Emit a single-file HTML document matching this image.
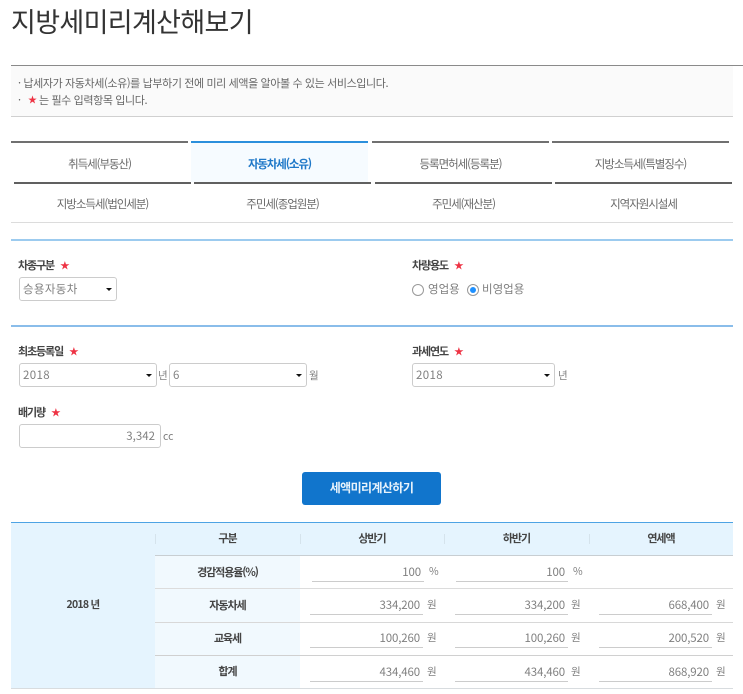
<!DOCTYPE html>
<html lang="ko"><head><meta charset="utf-8"><style>
html,body{margin:0;padding:0;background:#fff}
#p{position:relative;width:743px;height:694px;overflow:hidden;background:#fff;font-family:"Noto Sans CJK KR","Liberation Sans",sans-serif;color:#666}
#p div{position:absolute;white-space:nowrap}
.l{height:1px}
.tab{font-size:11.5px;letter-spacing:-1.05px;text-align:center;line-height:16px;color:#6a6a6a;width:177px}
.lab{font-size:11px;font-weight:700;letter-spacing:-1.1px;color:#444;line-height:16px}
.lab i{font-style:normal;color:#ee3344;margin-left:6px;font-size:9.5px;font-weight:400;letter-spacing:0}
.sel{box-sizing:border-box;border:1px solid #ccc;border-radius:3px;background:#fff;height:24px;line-height:23px;font-size:11.5px;color:#808080;padding-left:3px;letter-spacing:.35px}
.sel:after{content:"";position:absolute;right:4px;top:10px;border:3px solid transparent;border-top:3px solid #111;border-bottom:0}
.inp{box-sizing:border-box;border:1px solid #ccc;border-radius:3px;background:#fff;height:24px;line-height:23px;font-size:11.5px;color:#808080;text-align:right;padding-right:5px}
.u{font-size:10.5px;color:#808080;line-height:16px}
.th{font-size:11px;font-weight:700;letter-spacing:-1px;color:#444;text-align:center;line-height:16px}
.v{font-size:11.5px;letter-spacing:-.15px;color:#808080;text-align:right;line-height:16px;border-bottom:1px solid #ccc;height:24px;box-sizing:border-box;padding:6px 3px 0 0}
.n{font-size:11px;letter-spacing:-.38px;line-height:16px;color:#666}
</style></head><body><div id="p">
<div style="left:11px;top:3px;font-size:27px;letter-spacing:-.65px;line-height:36px;color:#333;font-weight:400">지방세미리계산해보기</div>
<div class="l" style="left:11px;top:65px;width:732px;background:#8a8a8a"></div>
<div style="left:11px;top:66px;width:722px;height:50px;background:#fafafa"></div>
<div class="l" style="left:11px;top:116px;width:722px;background:#d0d0d0"></div>
<div class="n" style="left:18px;top:75px">· 납세자가 자동차세(소유)를 납부하기 전에 미리 세액을 알아볼 수 있는 서비스입니다.</div>
<div class="n" style="left:18px;top:92px">·</div>
<div style="left:28px;top:92px;font-size:9px;line-height:16px;color:#ee3344">★</div>
<div class="n" style="left:39px;top:92px">는 필수 입력항목 입니다.</div>

<div style="left:191px;top:143px;width:177px;height:39px;background:#f6fbff"></div>
<div style="left:11px;top:141px;width:177px;height:2px;background:#707070"></div>
<div style="left:191px;top:141px;width:177px;height:2px;background:#2b8fdc"></div>
<div style="left:372px;top:141px;width:177px;height:2px;background:#707070"></div>
<div style="left:552px;top:141px;width:177px;height:2px;background:#707070"></div>
<div style="left:14px;top:182px;width:177px;height:2px;background:#606060"></div>
<div style="left:194px;top:182px;width:177px;height:2px;background:#606060"></div>
<div style="left:375px;top:182px;width:177px;height:2px;background:#606060"></div>
<div style="left:555px;top:182px;width:177px;height:2px;background:#606060"></div>
<div class="tab" style="left:11px;top:156px">취득세(부동산)</div>
<div class="tab" style="left:191px;top:156px;color:#1f78c8;font-weight:700;letter-spacing:-1.15px">자동차세(소유)</div>
<div class="tab" style="left:372px;top:156px">등록면허세(등록분)</div>
<div class="tab" style="left:552px;top:156px">지방소득세(특별징수)</div>
<div class="tab" style="left:14px;top:196px">지방소득세(법인세분)</div>
<div class="tab" style="left:194px;top:196px">주민세(종업원분)</div>
<div class="tab" style="left:375px;top:196px">주민세(재산분)</div>
<div class="tab" style="left:555px;top:196px">지역자원시설세</div>
<div class="l" style="left:11px;top:222px;width:722px;background:#dcdcdc"></div>

<div style="left:11px;top:239px;width:722px;height:2px;background:#9ccbef"></div>
<div class="lab" style="left:18px;top:257px">차종구분<i>★</i></div>
<div class="sel" style="left:19px;top:277px;width:98px">승용자동차</div>
<div class="lab" style="left:412px;top:257px">차량용도<i>★</i></div>
<div style="left:412px;top:284px;width:10px;height:10px;border:1px solid #999;border-radius:50%"></div>
<div style="left:428px;top:281px;font-size:11.5px;line-height:16px;color:#808080">영업용</div>
<div style="left:467px;top:284px;width:10px;height:10px;border:1px solid #999;border-radius:50%"></div>
<div style="left:470px;top:287px;width:6px;height:6px;background:#1e90ff;border-radius:50%"></div>
<div style="left:482px;top:281px;font-size:11.5px;line-height:16px;color:#808080">비영업용</div>

<div style="left:11px;top:325px;width:722px;height:2px;background:#8abdea"></div>
<div class="lab" style="left:18px;top:343px">최초등록일<i>★</i></div>
<div class="sel" style="left:19px;top:363px;width:138px">2018</div>
<div class="u" style="left:158px;top:368px">년</div>
<div class="sel" style="left:169px;top:363px;width:138px">6</div>
<div class="u" style="left:309px;top:368px">월</div>
<div class="lab" style="left:412px;top:343px">과세연도<i>★</i></div>
<div class="sel" style="left:412px;top:363px;width:143px">2018</div>
<div class="u" style="left:558px;top:368px">년</div>
<div class="lab" style="left:18px;top:404px">배기량<i>★</i></div>
<div class="inp" style="left:19px;top:424px;width:142px">3,342</div>
<div class="u" style="left:163px;top:429px">cc</div>

<div style="left:302px;top:472px;width:139px;height:33px;background:#1175cc;border-radius:3px;color:#e8f3fb;font-size:12px;font-weight:700;letter-spacing:-.6px;line-height:32px;text-align:center">세액미리계산하기</div>

<div style="left:11px;top:522px;width:722px;height:33px;background:#e5f4fe"></div>
<div style="left:11px;top:522px;width:144px;height:167px;background:#e5f4fe"></div>
<div style="left:155px;top:556px;width:145px;height:133px;background:#f1f9fe"></div>
<div style="left:11px;top:522px;width:722px;height:1px;background:#4da3e4"></div>
<div class="l" style="left:155px;top:555px;width:578px;background:#c8ced2"></div>
<div class="l" style="left:155px;top:588px;width:578px;background:#dcdcdc"></div>
<div class="l" style="left:155px;top:622px;width:578px;background:#d8d8d8"></div>
<div class="l" style="left:155px;top:655px;width:578px;background:#d0d0d0"></div>
<div class="l" style="left:11px;top:688px;width:722px;background:#d8dcdf"></div>
<div style="left:155px;top:534px;width:1px;height:10px;background:#d5e3ec"></div>
<div style="left:300px;top:534px;width:1px;height:10px;background:#d5e3ec"></div>
<div style="left:444px;top:534px;width:1px;height:10px;background:#d5e3ec"></div>
<div style="left:589px;top:534px;width:1px;height:10px;background:#d5e3ec"></div>

<div class="th" style="left:155px;top:530px;width:145px">구분</div>
<div class="th" style="left:300px;top:530px;width:144px">상반기</div>
<div class="th" style="left:444px;top:530px;width:145px">하반기</div>
<div class="th" style="left:589px;top:530px;width:144px">연세액</div>
<div class="th" style="left:11px;top:597px;width:144px;font-size:10.5px;letter-spacing:-.75px">2018 년</div>
<div class="th" style="left:155px;top:564px;width:145px;letter-spacing:-1.1px">경감적용율(%)</div>
<div class="th" style="left:155px;top:597px;width:145px">자동차세</div>
<div class="th" style="left:155px;top:630px;width:145px">교육세</div>
<div class="th" style="left:155px;top:663px;width:145px">합계</div>

<div class="v" style="left:312px;top:558px;width:112px">100</div><div class="u" style="left:429px;top:564px">%</div>
<div class="v" style="left:456px;top:558px;width:112px">100</div><div class="u" style="left:573px;top:564px">%</div>

<div class="v" style="left:310px;top:591px;width:113px">334,200</div><div class="u" style="left:427px;top:597px">원</div>
<div class="v" style="left:455px;top:591px;width:113px">334,200</div><div class="u" style="left:571px;top:597px">원</div>
<div class="v" style="left:599px;top:591px;width:113px">668,400</div><div class="u" style="left:716px;top:597px">원</div>

<div class="v" style="left:310px;top:624px;width:113px">100,260</div><div class="u" style="left:427px;top:630px">원</div>
<div class="v" style="left:455px;top:624px;width:113px">100,260</div><div class="u" style="left:571px;top:630px">원</div>
<div class="v" style="left:599px;top:624px;width:113px">200,520</div><div class="u" style="left:716px;top:630px">원</div>

<div class="v" style="left:310px;top:658px;width:113px">434,460</div><div class="u" style="left:427px;top:664px">원</div>
<div class="v" style="left:455px;top:658px;width:113px">434,460</div><div class="u" style="left:571px;top:664px">원</div>
<div class="v" style="left:599px;top:658px;width:113px">868,920</div><div class="u" style="left:716px;top:664px">원</div>
</div></body></html>
